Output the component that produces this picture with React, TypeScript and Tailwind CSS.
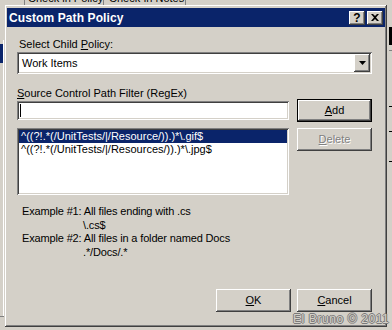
import React from "react";

const raised =
  "shadow-[inset_-1px_-1px_#404040,inset_1px_1px_#ffffff,inset_-2px_-2px_#808080,inset_2px_2px_#d4d0c8]";
const sunken =
  "shadow-[inset_1px_1px_#808080,inset_-1px_-1px_#ffffff,inset_2px_2px_#404040,inset_-2px_-2px_#d4d0c8]";

function Btn({
  children,
  def,
  disabled,
  className = "",
}: {
  children: React.ReactNode;
  def?: boolean;
  disabled?: boolean;
  className?: string;
}) {
  return (
    <div className={`w-[75px] h-[23px] ${def ? "border border-black" : ""} ${className}`}>
      <div
        className={`w-full h-full bg-[#d4d0c8] ${raised} flex items-center justify-center ${
          disabled ? "text-[#808080] [text-shadow:1px_1px_#ffffff]" : "text-black"
        }`}
      >
        {children}
      </div>
    </div>
  );
}

export default function App() {
  return (
    <div className="relative w-[392px] h-[330px] bg-[#d4d0c8] overflow-hidden font-['Liberation_Sans',Arial,sans-serif] text-[11px] text-black">
      {/* background window bits */}
      <div className="absolute left-[24px] top-0 w-[80px] h-[5px] border-x border-[#808080] overflow-hidden">
        <span className="block whitespace-nowrap leading-[11px] -mt-[7px] pl-[3px]">Check in Policy</span>
      </div>
      <div className="absolute left-[106px] top-0 w-[80px] h-[5px] border-r border-[#808080] overflow-hidden">
        <span className="block whitespace-nowrap leading-[11px] -mt-[7px] pl-[3px]">Check-in Notes</span>
      </div>
      <div className="absolute left-0 top-[44px] w-[4px] h-[19px] bg-[#0a246a]" />
      <div className="absolute left-[3px] top-[40px] w-[1px] h-[276px] bg-white" />
      <div className="absolute left-0 top-[316px] w-[4px] h-[1px] bg-[#808080]" />
      <div className="absolute right-0 top-[27px] w-[3px] h-[18px] bg-black" />
      <div className="absolute right-0 top-[50px] w-[3px] h-[1px] bg-[#808080]" />
      <div className="absolute right-0 top-[106px] w-[3px] h-[1px] bg-black" />
      <div className="absolute right-0 top-[131px] w-[3px] h-[1px] bg-black" />
      <div className="absolute right-0 top-[161px] w-[3px] h-[1px] bg-black" />

      {/* dialog */}
      <div
        className={`absolute left-[5px] top-[5px] w-[382px] h-[322px] bg-[#d4d0c8] ${raised} p-[2px] flex flex-col`}
      >
        <div className="h-[19px] mt-[1px] bg-[#0a246a] flex items-center pl-[2px] pr-[2px]">
          <span className="text-white font-bold text-[12px] tracking-[0.1px] flex-1">Custom Path Policy</span>
          <div className={`w-[16px] h-[14px] bg-[#d4d0c8] ${raised} flex items-center justify-center font-bold text-[12px] leading-none`}>
            ?
          </div>
          <div className={`ml-[2px] w-[16px] h-[14px] bg-[#d4d0c8] ${raised} flex items-center justify-center`}>
            <svg width="8" height="7" viewBox="0 0 8 7">
              <path d="M0 0h2l2 2 2-2h2L5 3.5 8 7H6L4 5 2 7H0l3-3.5z" fill="#000" />
            </svg>
          </div>
        </div>

        <div className="flex flex-col pl-[10px] pr-[13px]">
          <div className="mt-[11px] h-[13px] leading-[13px] pl-[2px]">
            Select Child <span className="underline">P</span>olicy:
          </div>
          <div className={`mt-[1px] h-[22px] bg-white ${sunken} flex items-center pl-[5px] pr-[2px]`}>
            <span className="flex-1">Work Items</span>
            <div className={`w-[16px] h-[18px] bg-[#d4d0c8] ${raised} flex items-center justify-center`}>
              <svg width="7" height="4" viewBox="0 0 7 4">
                <path d="M0 0h7L3.5 4z" fill="#000" />
              </svg>
            </div>
          </div>

          <div className="mt-[13px] h-[13px] leading-[13px]">
            <span className="underline">S</span>ource Control Path Filter (RegEx)
          </div>

          <div className="mt-[-1px] flex gap-[8px]">
            <div className="w-[272px] flex flex-col">
              <div className={`mt-[2px] h-[19px] bg-white ${sunken} flex items-center pl-[3px]`}>
                <div className="w-[1px] h-[13px] bg-black" />
              </div>
              <div className={`mt-[8px] h-[67px] bg-white ${sunken} p-[2px] flex flex-col`}>
                <div className="h-[13px] leading-[13px] bg-[#0a246a] text-white pl-[2px] whitespace-nowrap">
                  {"^((?!.*(/UnitTests/|/Resource/)).)*\\.gif$"}
                </div>
                <div className="h-[13px] leading-[13px] pl-[2px] whitespace-nowrap">
                  {"^((?!.*(/UnitTests/|/Resources/)).)*\\.jpg$"}
                </div>
              </div>
            </div>
            <div className="flex flex-col gap-[6px]">
              <Btn def>
                <span>
                  <span className="underline">A</span>dd
                </span>
              </Btn>
              <Btn disabled>
                <span>
                  <span className="underline">D</span>elete
                </span>
              </Btn>
            </div>
          </div>

          <div className="mt-[10px] pl-[5px] leading-[13.5px] tracking-[-0.15px]">
            <div>Example #1: All files ending with .cs</div>
            <div className="pl-[61px]">{"\\.cs$"}</div>
            <div>Example #2: All files in a folder named Docs</div>
            <div className="pl-[61px]">{".*/Docs/.*"}</div>
          </div>
        </div>

        <div className="mt-auto mb-[13px] flex justify-end gap-[6px] pr-[13px]">
          <Btn>
            <span>
              <span className="underline">O</span>K
            </span>
          </Btn>
          <Btn>
            <span>
              <span className="underline">C</span>ancel
            </span>
          </Btn>
        </div>
      </div>

      {/* watermark */}
      <div className="absolute left-[293px] top-[313px] text-[12px] leading-[13px] text-[#d4d0c8] tracking-[0.6px] [text-shadow:1px_0_#7a7a7a,-1px_0_#7a7a7a,0_1px_#7a7a7a,0_-1px_#7a7a7a]">
        El Bruno © 2011
      </div>
    </div>
  );
}
